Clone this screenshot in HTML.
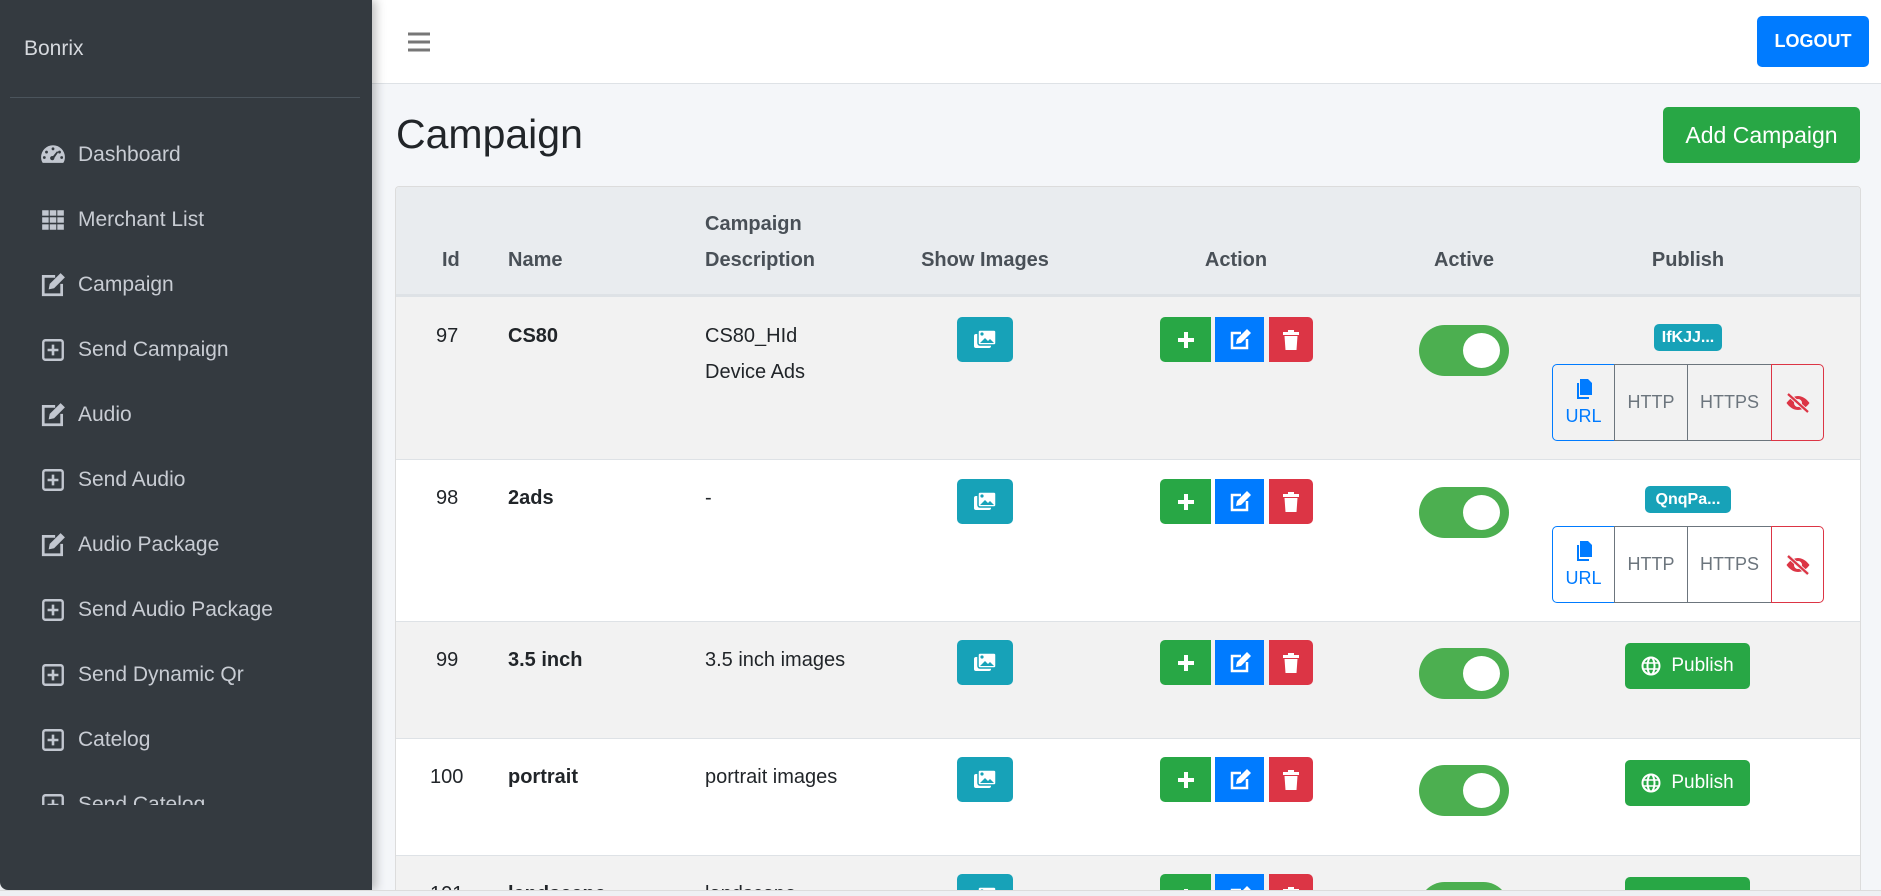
<!DOCTYPE html>
<html><head><meta charset="utf-8">
<style>
*{box-sizing:border-box;margin:0;padding:0}
body{width:1881px;height:896px;overflow:hidden;background:#f4f6f9;font-family:"Liberation Sans",sans-serif;position:relative;color:#212529}
.abs{position:absolute}
#side{left:0;top:0;width:372px;height:890px;background:#343a40;border-bottom-left-radius:8px;box-shadow:4px 0 10px rgba(0,0,0,.25);overflow:hidden;z-index:2}
.brand{left:24px;top:37px;font-size:21px;color:#d6d9de}
.div{left:10px;top:97px;width:350px;height:1px;background:#4b545c}
.nav{left:0;top:120px;width:372px;height:685px;overflow:hidden}
.item{position:absolute;left:40px;height:30px;display:flex;align-items:center;color:#c8ccd3;font-size:21px}
.item svg{width:26px;height:26px;margin-right:12px;flex:none}
#top{left:372px;top:0;width:1509px;height:84px;background:#fff;border-bottom:1px solid #dee2e6}
.btn{position:absolute;display:flex;align-items:center;justify-content:center;color:#fff;border-radius:5px}
.h1{left:396px;top:111px;font-size:41px;color:#212529}
#card{left:395px;top:186px;width:1466px;height:710px;background:#fff;border:1px solid #dcdcdc;border-radius:4px;overflow:hidden}
.th{position:absolute;font-weight:bold;font-size:20px;color:#495057;line-height:36px}
.row{position:absolute;left:0;width:1466px;border-top:1px solid #dee2e6}
.td{position:absolute;font-size:20px;line-height:36px}
.sq{position:absolute;width:50px;height:45px;display:flex;align-items:center;justify-content:center}
.tog{position:absolute;width:90px;height:51px;border-radius:26px;background:#4caf50}
.tog:after{content:"";position:absolute;right:9px;top:8px;width:37px;height:35px;border-radius:50%;background:#fff}
.badge{position:absolute;height:27px;background:#17a2b8;color:#fff;font-weight:bold;font-size:16px;border-radius:5px;display:flex;align-items:center;justify-content:center}
.grp{position:absolute;height:77px;display:flex}
.grp div{height:77px;display:flex;flex-direction:column;align-items:center;justify-content:center;font-size:18px;color:#6c757d;border:1px solid #6c757d;margin-left:-1px}
</style></head><body>
<div id="side" class="abs">
<div class="abs brand">Bonrix</div>
<div class="abs div"></div>
<div class="abs nav">
<div class="item" style="top:20px"><svg viewBox="0 0 24 24"><path fill="#c2c7d0" d="M12 3A11 11 0 0 0 1 14c0 2 .5 3.8 1.5 5.3h19C22.5 17.8 23 16 23 14A11 11 0 0 0 12 3zm0 2a1.3 1.3 0 1 1 0 2.6A1.3 1.3 0 0 1 12 5zM6 8a1.3 1.3 0 1 1 0 2.6A1.3 1.3 0 0 1 6 8zm12 0a1.3 1.3 0 1 1 0 2.6A1.3 1.3 0 0 1 18 8zM4 13a1.3 1.3 0 1 1 0 2.6A1.3 1.3 0 0 1 4 13zm16 0a1.3 1.3 0 1 1 0 2.6 1.3 1.3 0 0 1 0-2.6zm-4.3-4.5 1.2.8-3.6 5.4A2 2 0 1 1 12 13z"/></svg>Dashboard</div>
<div class="item" style="top:85px"><svg viewBox="0 0 24 24"><g fill="#c2c7d0"><rect x="2" y="3" width="6" height="5"/><rect x="9" y="3" width="6" height="5"/><rect x="16" y="3" width="6" height="5"/><rect x="2" y="9.5" width="6" height="5"/><rect x="9" y="9.5" width="6" height="5"/><rect x="16" y="9.5" width="6" height="5"/><rect x="2" y="16" width="6" height="5"/><rect x="9" y="16" width="6" height="5"/><rect x="16" y="16" width="6" height="5"/></g></svg>Merchant List</div>
<div class="item" style="top:150px"><svg viewBox="0 0 24 24"><path fill="none" stroke="#c2c7d0" stroke-width="2.5" d="M14 4H3v17h17V11"/><path fill="#c2c7d0" d="M19 1l4 4-10 10-5 1 1-5z"/></svg>Campaign</div>
<div class="item" style="top:215px"><svg viewBox="0 0 24 24"><rect x="3" y="3" width="18" height="18" rx="2" fill="none" stroke="#c2c7d0" stroke-width="2.2"/><path d="M12 7v10M7 12h10" stroke="#c2c7d0" stroke-width="2.4"/></svg>Send Campaign</div>
<div class="item" style="top:280px"><svg viewBox="0 0 24 24"><path fill="none" stroke="#c2c7d0" stroke-width="2.5" d="M14 4H3v17h17V11"/><path fill="#c2c7d0" d="M19 1l4 4-10 10-5 1 1-5z"/></svg>Audio</div>
<div class="item" style="top:345px"><svg viewBox="0 0 24 24"><rect x="3" y="3" width="18" height="18" rx="2" fill="none" stroke="#c2c7d0" stroke-width="2.2"/><path d="M12 7v10M7 12h10" stroke="#c2c7d0" stroke-width="2.4"/></svg>Send Audio</div>
<div class="item" style="top:410px"><svg viewBox="0 0 24 24"><path fill="none" stroke="#c2c7d0" stroke-width="2.5" d="M14 4H3v17h17V11"/><path fill="#c2c7d0" d="M19 1l4 4-10 10-5 1 1-5z"/></svg>Audio Package</div>
<div class="item" style="top:475px"><svg viewBox="0 0 24 24"><rect x="3" y="3" width="18" height="18" rx="2" fill="none" stroke="#c2c7d0" stroke-width="2.2"/><path d="M12 7v10M7 12h10" stroke="#c2c7d0" stroke-width="2.4"/></svg>Send Audio Package</div>
<div class="item" style="top:540px"><svg viewBox="0 0 24 24"><rect x="3" y="3" width="18" height="18" rx="2" fill="none" stroke="#c2c7d0" stroke-width="2.2"/><path d="M12 7v10M7 12h10" stroke="#c2c7d0" stroke-width="2.4"/></svg>Send Dynamic Qr</div>
<div class="item" style="top:605px"><svg viewBox="0 0 24 24"><rect x="3" y="3" width="18" height="18" rx="2" fill="none" stroke="#c2c7d0" stroke-width="2.2"/><path d="M12 7v10M7 12h10" stroke="#c2c7d0" stroke-width="2.4"/></svg>Catelog</div>
<div class="item" style="top:670px"><svg viewBox="0 0 24 24"><rect x="3" y="3" width="18" height="18" rx="2" fill="none" stroke="#c2c7d0" stroke-width="2.2"/><path d="M12 7v10M7 12h10" stroke="#c2c7d0" stroke-width="2.4"/></svg>Send Catelog</div>
</div>
</div>
<div id="top" class="abs">
<svg class="abs" style="left:36px;top:32px" width="22" height="20" viewBox="0 0 22 20"><path d="M0 2h22M0 10h22M0 18h22" stroke="#777" stroke-width="3"/></svg>
<div class="btn" style="left:1385px;top:16px;width:112px;height:51px;background:#007bff;font-size:18px;font-weight:600">LOGOUT</div>
</div>
<div class="abs h1">Campaign</div>
<div class="btn" style="left:1663px;top:107px;width:197px;height:56px;background:#28a745;font-size:23px">Add Campaign</div>
<div id="card" class="abs">
<div class="abs" style="left:0;top:0;width:1466px;height:109px;background:#e9ecef;border-bottom:2px solid #dee2e6"></div>
<div class="th" style="left:46px;top:55px">Id</div>
<div class="th" style="left:112px;top:55px">Name</div>
<div class="th" style="left:309px;top:19px">Campaign<br>Description</div>
<div class="th" style="left:515px;top:55px;width:148px;text-align:center">Show Images</div>
<div class="th" style="left:790px;top:55px;width:100px;text-align:center">Action</div>
<div class="th" style="left:1018px;top:55px;width:100px;text-align:center">Active</div>
<div class="th" style="left:1242px;top:55px;width:100px;text-align:center">Publish</div>

<div class="row" style="top:109px;height:163px;background:#f2f2f2"></div>
<div class="row" style="top:272px;height:162px;background:#fff"></div>
<div class="row" style="top:434px;height:117px;background:#f2f2f2"></div>
<div class="row" style="top:551px;height:117px;background:#fff"></div>
<div class="row" style="top:668px;height:50px;background:#f2f2f2"></div>

<div class="td" style="left:40px;top:131px">97</div><div class="td" style="left:112px;top:131px;font-weight:bold">CS80</div><div class="td" style="left:309px;top:131px">CS80_HId<br>Device Ads</div>
<div class="td" style="left:40px;top:293px">98</div><div class="td" style="left:112px;top:293px;font-weight:bold">2ads</div><div class="td" style="left:309px;top:293px">-</div>
<div class="td" style="left:40px;top:455px">99</div><div class="td" style="left:112px;top:455px;font-weight:bold">3.5 inch</div><div class="td" style="left:309px;top:455px">3.5 inch images</div>
<div class="td" style="left:34px;top:572px">100</div><div class="td" style="left:112px;top:572px;font-weight:bold">portrait</div><div class="td" style="left:309px;top:572px">portrait images</div>
<div class="td" style="left:34px;top:689px">101</div><div class="td" style="left:112px;top:689px;font-weight:bold">landscape</div><div class="td" style="left:309px;top:689px">landscape</div>

<div id="btns"></div>
</div>
<div class="abs" style="left:0;top:890px;width:1881px;height:6px;background:#eef0f3;border-top:1px solid #dcdcdc;z-index:3"></div>

<script>
var tops=[130,292,453,570,687];
var h='';
var img='<svg width="24" height="22" viewBox="0 0 24 22"><rect x="1" y="5" width="17" height="14" rx="2" fill="#fff"/><rect x="5" y="1" width="18" height="15" rx="2" fill="#fff" stroke="#17a2b8" stroke-width="1.5"/><circle cx="9" cy="5" r="1.6" fill="#17a2b8"/><path d="M7 14l5-5 3 3 2-2 4 4z" fill="#17a2b8"/></svg>';
var plus='<svg width="20" height="20"><path d="M10 2v16M2 10h16" stroke="#fff" stroke-width="4"/></svg>';
var edit='<svg width="24" height="24" viewBox="0 0 24 24"><path fill="none" stroke="#fff" stroke-width="2.5" d="M13 5H4v15h15v-9"/><path fill="#fff" d="M19 1l4 4-10 10-5 1 1-5z"/></svg>';
var trash='<svg width="18" height="22" viewBox="0 0 18 22"><path fill="#fff" d="M1 3h16v3H1zM6 1h6v3H6zM2.5 7h13l-1 14h-11z"/></svg>';
var globe='<svg width="20" height="20" viewBox="0 0 20 20"><circle cx="10" cy="10" r="8.5" fill="none" stroke="#fff" stroke-width="2"/><ellipse cx="10" cy="10" rx="3.5" ry="8.5" fill="none" stroke="#fff" stroke-width="2"/><path d="M2 7h16M2 13h16" stroke="#fff" stroke-width="1.6"/></svg>';
var copy='<svg width="18" height="22" viewBox="0 0 18 22"><path fill="#007bff" d="M5 1h8l4 4v12H5z"/><path fill="#007bff" d="M2 5h2v14h10v2H2z"/></svg>';
var eye='<svg width="26" height="22" viewBox="0 0 26 22"><path fill="#dc3545" d="M13 4C7 4 3 9 1.5 11 3 13 7 18 13 18s10-5 11.5-7C23 9 19 4 13 4zm0 3a4 4 0 1 1 0 8 4 4 0 0 1 0-8z"/><path d="M3 2l20 18" stroke="#f2f2f2" stroke-width="4"/><path d="M3 2l20 18" stroke="#dc3545" stroke-width="2.2"/></svg>';
tops.forEach(function(t,i){
 h+='<div class="sq" style="left:561px;top:'+t+'px;width:56px;background:#17a2b8;border-radius:5px">'+img+'</div>';
 h+='<div class="sq" style="left:764px;top:'+t+'px;width:51px;background:#28a745;border-radius:5px 0 0 5px">'+plus+'</div>';
 h+='<div class="sq" style="left:819px;top:'+t+'px;width:49px;background:#007bff">'+edit+'</div>';
 h+='<div class="sq" style="left:873px;top:'+t+'px;width:44px;background:#dc3545;border-radius:0 5px 5px 0">'+trash+'</div>';
 h+='<div class="tog" style="left:1023px;top:'+(t+8)+'px"></div>';
 if(i<2){
  h+='<div class="badge" style="left:'+(i==0?1258:1249)+'px;top:'+(t+7)+'px;width:'+(i==0?68:86)+'px">'+(i==0?'IfKJJ...':'QnqPa...')+'</div>';
  h+='<div class="grp" style="left:1156px;top:'+(t+47)+'px">'+
  '<div style="width:63px;margin-left:0;border-color:#007bff;color:#007bff;border-radius:5px 0 0 5px">'+copy+'<span style="margin-top:6px">URL</span></div>'+
  '<div style="width:74px">HTTP</div><div style="width:85px">HTTPS</div>'+
  '<div style="width:53px;border-color:#dc3545;border-radius:0 5px 5px 0">'+eye+'</div></div>';
 } else {
  h+='<div class="btn" style="left:1229px;top:'+(t+3)+'px;width:125px;height:46px;background:#28a745;font-size:19px">'+globe+'<span style="margin-left:10px">Publish</span></div>';
 }
});
document.getElementById('btns').innerHTML=h;
</script>
</body></html>
